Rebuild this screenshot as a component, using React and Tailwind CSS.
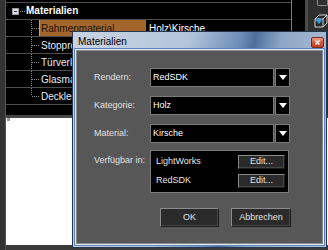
import React from 'react';

// tree connector drawn per row: vertical dotted spine + branch to the label
function Branch({ last }) {
    return (
        <svg width="33" height="16" className="shrink-0">
            <line x1="25.5" y1="0" x2="25.5" y2={last ? 8 : 16} stroke="#8c8c8c" strokeDasharray="1 1" />
            <line x1="26" y1="8.5" x2="33" y2="8.5" stroke="#8c8c8c" strokeDasharray="1 1" />
        </svg>
    );
}

function ComboArrow() {
    return (
        <svg width="8" height="5" viewBox="0 0 8 5">
            <polygon points="0,0 8,0 4,5" fill="#ffffff" />
        </svg>
    );
}

function Combo({ value }) {
    return (
        <div className="flex h-[19px] gap-[1px]">
            <div className="w-[124px] bg-black border border-[#7a7a7a] px-[2px] flex items-center text-[9px] text-white">
                {value}
            </div>
            <div className="w-[15px] bg-black border border-[#7a7a7a] flex items-center justify-center">
                <ComboArrow />
            </div>
        </div>
    );
}

function DarkButton({ children, className }) {
    return (
        <div
            className={
                'bg-[#2a2a2a] border border-t-[#8a8a8a] border-l-[#8a8a8a] border-r-[#1c1c1c] border-b-[#1c1c1c] shadow-[inset_-1px_-1px_0_#444] flex items-center justify-center text-[9px] text-[#e2e2e2] ' +
                className
            }
        >
            {children}
        </div>
    );
}

const children = ['Rahmenmaterial', 'Stopprofil', 'Türverkleidung', 'Glasmaterial', 'Deckleiste'];

export default function App() {
    return (
        <div className="relative w-[328px] h-[250px] overflow-hidden bg-[#3a3a3a] font-['Liberation_Sans',Arial,sans-serif] flex">
            {/* left edge strip */}
            <div className="w-[6px] shrink-0 bg-[#333] border-r border-[#555]" />

            <div className="flex-1 flex flex-col">
                {/* tree table */}
                <div className="h-[115px] flex bg-black">
                    <div className="w-[286px] shrink-0 border-r border-[#7a7a7a] flex flex-col">
                        <div className="h-[3px] border-b border-[#4d4d4d]" />
                        <div className="h-[17px] border-b border-[#4d4d4d] flex items-center">
                            <div className="ml-[6px] w-[7px] h-[7px] bg-[#dcdcdc] border border-[#9a9a9a] flex items-center justify-center">
                                <div className="w-[3px] h-[1px] bg-[#24365a]" />
                            </div>
                            <div className="w-[5px] ml-[1px] border-t border-dotted border-[#8c8c8c]" />
                            <span className="ml-[1px] text-[10px] font-bold text-white leading-none">Materialien</span>
                        </div>
                        {children.map((name, i) => (
                            <div key={name} className="h-[17px] border-b border-[#4d4d4d] flex">
                                <Branch last={i === children.length - 1} />
                                {i === 0 ? (
                                    <>
                                        <div className="w-[107px] bg-[#a4662d] border-l border-[#3fd0d0] pl-[1px] flex items-center text-[10px] text-[#1a1209]">
                                            {name}
                                        </div>
                                        <div className="flex-1 ml-[1px] flex items-center pl-[2px] text-[10px] text-white">
                                            Holz\Kirsche
                                        </div>
                                    </>
                                ) : (
                                    <div className="pl-[2px] flex items-center text-[10px] text-[#e4ecf4]">{name}</div>
                                )}
                            </div>
                        ))}
                    </div>
                    <div className="w-[13px] shrink-0 bg-black" />
                    <div className="w-[3px] shrink-0 bg-[#4a4a4a]" />
                    <div className="flex-1 bg-[#2f2f2f] flex flex-col items-end">
                        <div className="w-[11px] h-[6px] border border-t-0 border-[#8a8a8a] rounded-b-[2px]" />
                        <svg width="14" height="14" viewBox="0 0 14 14" className="mt-[8px] self-end">
                            <path d="M1 5 L5 1 L13 1 L13 9 L9 13 L1 13 Z" fill="#2a2a2a" stroke="#cfcfcf" strokeWidth="1" />
                            <path d="M1 5 L9 5 L13 1 M9 5 L9 13" fill="none" stroke="#cfcfcf" strokeWidth="1" />
                            <path d="M5 4 L8 6.5 L5 10 L2 6.5 Z" fill="#2aa6e6" />
                        </svg>
                    </div>
                </div>
                <div className="h-[3px] bg-[#454545]" />
                <div className="flex-1 bg-white">
                    <div className="w-[3px] h-[3px] ml-[1px] bg-[#9a9a9a]" />
                </div>
                <div className="h-[5px] bg-[#3a3a3a]" />
            </div>

            {/* dialog window */}
            <div className="absolute left-[72px] top-[31px] w-[255px] h-[217px] flex flex-col border border-[#26364f] bg-[linear-gradient(100deg,#c8d4e4_0%,#b4c5da_40%,#6d8db8_58%,#4e6f9c_63%,#8ea6c6_72%,#b7c8dc_100%)]">
                <div className="h-[16px] flex items-end justify-between pl-[5px] pr-[2px]">
                    <span className="text-[10px] leading-[12px] text-black">Materialien</span>
                    <div className="w-[13px] h-[11px] rounded-[2px] border border-[#7a2a1c] bg-[linear-gradient(180deg,#eea28a_0%,#d65a3e_50%,#bd3b20_100%)] flex items-center justify-center">
                        <svg width="5" height="5" viewBox="0 0 5 5">
                            <path d="M0.5 0.5 L4.5 4.5 M4.5 0.5 L0.5 4.5" stroke="#fff" strokeWidth="1.3" />
                        </svg>
                    </div>
                </div>
                <div className="flex-1 mx-[1px] mb-[1px] border border-[#5b83bd]">
                    <div className="h-full border border-[#e4eaf2]">
                        <div className="h-full border border-[#8a8a8a] bg-[#575757] flex flex-col pt-[17px] pl-[17px]">
                            <div className="flex items-center">
                                <div className="w-[56px] text-[9px] text-[#e0e0e0]">Rendern:</div>
                                <Combo value="RedSDK" />
                            </div>
                            <div className="flex items-center mt-[9px]">
                                <div className="w-[56px] text-[9px] text-[#e0e0e0]">Kategorie:</div>
                                <Combo value="Holz" />
                            </div>
                            <div className="flex items-center mt-[9px]">
                                <div className="w-[56px] text-[9px] text-[#e0e0e0]">Material:</div>
                                <Combo value="Kirsche" />
                            </div>
                            <div className="flex items-start mt-[7px]">
                                <div className="w-[56px] pt-[4px] text-[9px] text-[#e0e0e0]">Verfügbar in:</div>
                                <div className="w-[139px] h-[43px] bg-black border border-[#7a7a7a] flex flex-col gap-[5px] pt-[4px] pr-[3px] pl-[5px]">
                                    <div className="flex items-center justify-between">
                                        <span className="text-[9px] text-[#e4e4e4]">LightWorks</span>
                                        <DarkButton className="w-[47px] h-[14px]">Edit...</DarkButton>
                                    </div>
                                    <div className="flex items-center justify-between">
                                        <span className="text-[9px] text-[#e4e4e4]">RedSDK</span>
                                        <DarkButton className="w-[47px] h-[14px]">Edit...</DarkButton>
                                    </div>
                                </div>
                            </div>
                            <div className="flex gap-[12px] mt-[15px] ml-[66px]">
                                <DarkButton className="w-[59px] h-[19px]">OK</DarkButton>
                                <DarkButton className="w-[60px] h-[19px]">Abbrechen</DarkButton>
                            </div>
                        </div>
                    </div>
                </div>
            </div>
        </div>
    );
}
